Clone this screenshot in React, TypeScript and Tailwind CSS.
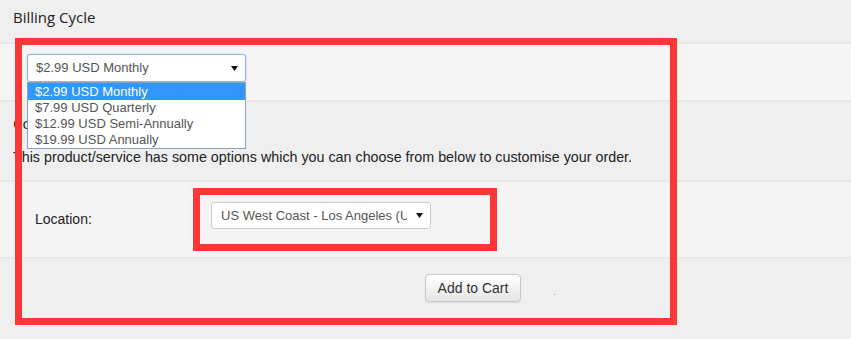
import React from 'react';

// ── Small pieces ─────────────────────────────────────────
function Caret() {
  return (
    <svg width="7" height="5" viewBox="0 0 7 5" className="shrink-0">
      <path d="M0 0 H7 L3.5 5 Z" fill="#111" />
    </svg>
  );
}

const billingOptions = [
  '$2.99 USD Monthly',
  '$7.99 USD Quarterly',
  '$12.99 USD Semi-Annually',
  '$19.99 USD Annually',
];

// ── Component ────────────────────────────────────────────
export default function App() {
  return (
    <div className="relative h-[339px] w-[851px] overflow-hidden bg-[#efefef] font-['Liberation_Sans',Arial,sans-serif] text-[#333]">
      {/* Billing cycle heading */}
      <div className="h-[42px] pl-[13px] pt-[6px] font-['Open_Sans',sans-serif] text-[15px] leading-[22px] text-[#222]">
        Billing Cycle
      </div>

      {/* Billing select with open list */}
      <div className="h-[58px] border-t-2 border-[#e8e8e8] bg-[#f5f5f5] pl-[27px] pt-[10px]">
        <div className="relative w-[219px]">
          <div className="flex h-[28px] items-center justify-between rounded-[3px] border border-[#8fb3e0] bg-white pl-[8px] pr-[7px] text-[13px] text-[#555] shadow-[0_0_2px_rgba(102,175,233,0.5)]">
            <span>$2.99 USD Monthly</span>
            <Caret />
          </div>
          <ul className="absolute left-0 top-full z-10 w-[219px] border border-[#8aa4c8] bg-white text-[13px] leading-[16px] text-[#555]">
            {billingOptions.map((opt, i) => (
              <li
                key={opt}
                className={
                  i === 0
                    ? 'h-[17px] bg-[#3296fb] pl-[7px] leading-[17px] text-white'
                    : 'h-[16px] pl-[7px]'
                }
              >
                {opt}
              </li>
            ))}
          </ul>
        </div>
      </div>

      {/* Configurable options */}
      <div className="h-[80px] border-t-2 border-[#e8e8e8] bg-[#efefef] pl-[13px] pt-[10px]">
        <div className="font-['Open_Sans',sans-serif] text-[15px] leading-[22px] text-[#222]">
          Configurable Options
        </div>
        <p className="mt-[13px] text-[14.3px] leading-[20px] text-[#222]">
          This product/service has some options which you can choose from below to customise your order.
        </p>
      </div>

      {/* Location row */}
      <div className="flex h-[77px] items-start border-t-2 border-[#e8e8e8] bg-[#f4f4f4] pl-[35px] pt-[20px]">
        <label className="mt-[7px] w-[176px] text-[14px] leading-[20px] text-[#222]">Location:</label>
        <div className="flex h-[27px] w-[220px] items-center justify-between rounded-[3px] border border-[#cccccc] bg-white pl-[9px] pr-[7px] text-[13px] text-[#555]">
          <span className="w-[186px] overflow-hidden whitespace-nowrap">US West Coast - Los Angeles (US)</span>
          <Caret />
        </div>
      </div>

      {/* Add to cart */}
      <div className="flex h-[82px] items-start border-t-2 border-[#e8e8e8] bg-[#efefef] pl-[425px] pt-[15px]">
        <button className="h-[28px] w-[96px] rounded-[4px] border border-[#c8c8c8] bg-gradient-to-b from-white to-[#e6e6e6] text-[14px] text-[#333] shadow-[0_1px_1px_rgba(0,0,0,0.08)]">
          Add to Cart
        </button>
        <span className="ml-[33px] mt-[20px] h-px w-px bg-[#999]" />
      </div>

      {/* Annotation boxes */}
      <div className="pointer-events-none absolute left-[15px] top-[38px] h-[287px] w-[662px] border-[7px] border-[#fd3636]" />
      <div className="pointer-events-none absolute left-[193px] top-[188px] h-[63px] w-[304px] border-[7px] border-[#fd3636]" />
    </div>
  );
}
